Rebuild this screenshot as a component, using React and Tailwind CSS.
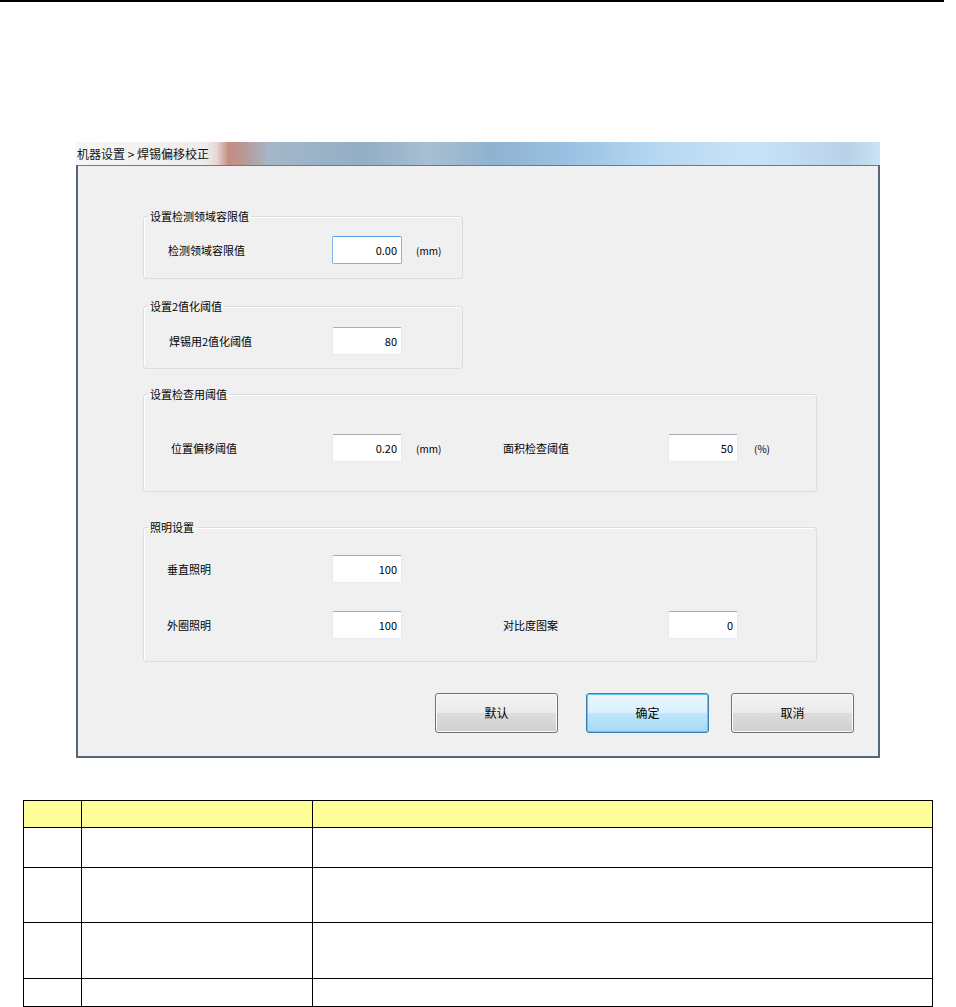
import React from 'react';

const font = "font-[family-name:'Noto_Sans_CJK_SC','Noto_Sans',sans-serif]";

function Field({ value, focused }) {
  return (
    <div
      className={
        'w-[70px] h-[28px] shrink-0 bg-white flex items-center justify-end pr-[4px] text-[11px] text-black rounded-[2px] border ' +
        (focused
          ? 'border-[#7eb4ea] border-t-[#569de5]'
          : 'border-[#e3e9ef] border-t-[#abadb3]')
      }
    >
      {value}
    </div>
  );
}

function Group({ title, className, children }) {
  return (
    <fieldset className={'ml-[65px] min-w-0 rounded-[3px] border border-[#d5dfe5] shadow-[inset_1px_1px_0_#ffffff] ' + className}>
      <legend className="ml-[4px] px-[2px] text-[11px] leading-[14px] text-black">{title}</legend>
      {children}
    </fieldset>
  );
}

function Row({ label, value, unit, pl, focused, label2, value2, unit2 }) {
  return (
    <div className="flex items-center text-[11px] text-black">
      <div className={'w-[188px] shrink-0 ' + pl}>{label}</div>
      <Field value={value} focused={focused} />
      {unit !== undefined || label2 ? (
        <div className="w-[101px] shrink-0 pl-[14px] text-[10px]">{unit}</div>
      ) : null}
      {label2 && (
        <>
          <div className="w-[165px] shrink-0">{label2}</div>
          <Field value={value2} />
          <div className="pl-[16px] text-[10px]">{unit2}</div>
        </>
      )}
    </div>
  );
}

function Button({ children, primary, className }) {
  return (
    <button
      className={
        'h-[40px] w-[123px] rounded-[3px] border text-[12px] text-black ' +
        (primary
          ? 'border-[#3c7fb1] bg-[linear-gradient(to_bottom,#eaf6fd_0%,#d9f0fc_50%,#bee6fd_51%,#a7d9f5_100%)] shadow-[inset_0_0_0_1px_#62c4f0] '
          : 'border-[#707070] bg-[linear-gradient(to_bottom,#f2f2f2_0%,#ebebeb_50%,#dddddd_51%,#cfcfcf_100%)] shadow-[inset_0_0_0_1px_#fcfcfc] ') +
        className
      }
    >
      {children}
    </button>
  );
}

export default function App() {
  return (
    <div className={'bg-white w-[956px] h-[1007px] overflow-hidden ' + font}>
      <div className="h-[2px] w-[944px] bg-black" />

      {/* dialog */}
      <div className="mt-[140px] ml-[76px] w-[804px]">
        <div className="h-[23px] flex items-center pl-[1px] text-[12px] text-[#111] bg-[linear-gradient(to_right,#f6f6f6_0%,#efedeb_16%,#e6d8d4_17.5%,#c58c80_19%,#b79a96_21%,#a4b7c8_24%,#93aec6_36%,#a9bfd2_44%,#8fb2d0_52%,#9cc3e4_62%,#b6d7f1_72%,#c8e3f7_84%,#b9d2e8_96%,#cae2f5_100%)]">
          机器设置 &gt; 焊锡偏移校正
        </div>
        <div className="h-[593px] bg-[#f0f0f0] border-t border-t-[#6d7b89] border-x-2 border-b-2 border-[#56657a] flex flex-col">
          <Group title="设置检测领域容限值" className="mt-[43px] w-[320px] h-[70px] pt-[13px]">
            <Row label="检测领域容限值" value="0.00" unit="(mm)" pl="pl-[24px]" focused />
          </Group>

          <Group title="设置2值化阈值" className="mt-[20px] w-[320px] h-[70px] pt-[14px]">
            <Row label="焊锡用2值化阈值" value="80" pl="pl-[25px]" />
          </Group>

          <Group title="设置检查用阈值" className="mt-[18px] w-[674px] h-[105px] pt-[33px]">
            <Row
              label="位置偏移阈值"
              value="0.20"
              unit="(mm)"
              pl="pl-[27px]"
              label2="面积检查阈值"
              value2="50"
              unit2="(%)"
            />
          </Group>

          <Group title="照明设置" className="mt-[28px] w-[674px] h-[142px] pt-[21px]">
            <div className="flex flex-col gap-[28px]">
              <Row label="垂直照明" value="100" pl="pl-[23px]" />
              <Row label="外圈照明" value="100" pl="pl-[23px]" label2="对比度图案" value2="0" />
            </div>
          </Group>

          <div className="mt-[31px] flex justify-end pr-[24px]">
            <Button className="w-[122px]">默认</Button>
            <Button primary className="ml-[28px]">确定</Button>
            <Button className="ml-[22px]">取消</Button>
          </div>
        </div>
      </div>

      {/* table */}
      <table className="mt-[42px] ml-[23px] w-[910px] border-collapse border border-black">
        <tbody>
          <tr className="h-[27px] bg-[#ffff99]">
            <td className="w-[58px] border border-black" />
            <td className="w-[231px] border border-black" />
            <td className="border border-black" />
          </tr>
          <tr className="h-[40px]">
            <td className="border border-black" />
            <td className="border border-black" />
            <td className="border border-black" />
          </tr>
          <tr className="h-[55px]">
            <td className="border border-black" />
            <td className="border border-black" />
            <td className="border border-black" />
          </tr>
          <tr className="h-[56px]">
            <td className="border border-black" />
            <td className="border border-black" />
            <td className="border border-black" />
          </tr>
          <tr className="h-[28px]">
            <td className="border border-black" />
            <td className="border border-black" />
            <td className="border border-black" />
          </tr>
        </tbody>
      </table>
    </div>
  );
}
